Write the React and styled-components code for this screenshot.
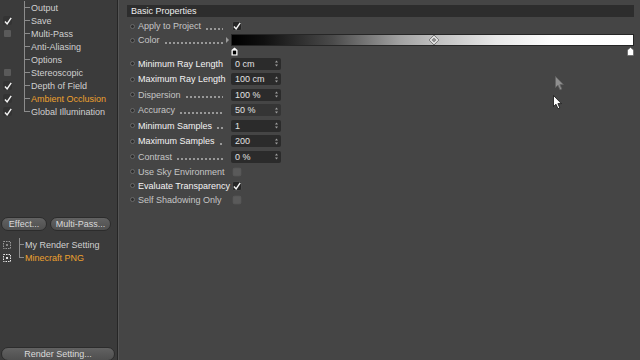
import React from "react";
import styled, { createGlobalStyle } from "styled-components";

// ==================== GLOBAL ====================
const GlobalStyle = createGlobalStyle`
  html, body {
    margin: 0;
    padding: 0;
    background: #454545;
  }
  body {
    font-family: "Liberation Sans", Arial, sans-serif;
    font-size: 9px;
    color: #cfcfcf;
    overflow: hidden;
  }
`;

const Screen = styled.div`
  position: relative;
  display: flex;
  width: 640px;
  height: 360px;
  overflow: hidden;
  background: #454545;
`;

// ==================== SIDEBAR ====================
const Sidebar = styled.div`
  width: 117px;
  flex-shrink: 0;
  display: flex;
  flex-direction: column;
  background: #3b3b3b;
  border-right: 1px solid #262626;
`;

const Tree = styled.div`
  height: 215px;
  flex-shrink: 0;
  padding-top: 1px;
  box-sizing: border-box;
`;

const TreeRow = styled.div`
  display: flex;
  align-items: center;
  height: 13px;
  white-space: nowrap;
`;

const CheckCell = styled.div`
  width: 19px;
  height: 13px;
  flex-shrink: 0;
  display: flex;
  align-items: center;
  padding-left: 3px;
  box-sizing: border-box;
`;

const SideTick = styled.span`
  display: flex;
  align-items: center;
  justify-content: center;
  width: 9px;
  height: 9px;
  border-radius: 2px;
  background: #333333;
`;

const EmptyBox = styled.span`
  display: block;
  width: 7px;
  height: 7px;
  margin-left: 1px;
  border-radius: 1px;
  background: #5a5a5a;
`;

const Branch = styled.span`
  position: relative;
  display: block;
  width: ${(p) => p.$width}px;
  height: 13px;
  flex-shrink: 0;

  &::before {
    content: "";
    position: absolute;
    left: ${(p) => p.$line}px;
    top: 0;
    width: 1px;
    height: ${(p) => (p.$last ? 7 : 13)}px;
    background: #8c8c8c;
  }
  &::after {
    content: "";
    position: absolute;
    left: ${(p) => p.$line}px;
    top: 6px;
    width: ${(p) => p.$width - p.$line - 1}px;
    height: 1px;
    background: #8c8c8c;
  }
`;

const TreeLabel = styled.span`
  color: ${(p) => (p.$active ? "#eea12e" : "#d0d0d0")};
`;

const ButtonRow = styled.div`
  height: 18px;
  flex-shrink: 0;
  display: flex;
  align-items: center;
  gap: 3px;
  padding-left: 1px;
`;

const PillButton = styled.div`
  width: ${(p) => p.$width}px;
  height: 14px;
  box-sizing: border-box;
  display: flex;
  align-items: center;
  justify-content: center;
  border-radius: 7px;
  border: 1px solid #2c2c2c;
  background: linear-gradient(#626262, #4f4f4f);
  color: #dadada;
  white-space: nowrap;
  flex-shrink: 0;
`;

const List = styled.div`
  flex: 1;
  padding-top: 5px;
  box-sizing: border-box;
`;

const ListIcon = styled.svg`
  display: block;
  width: 8px;
  height: 8px;
`;

const BottomBar = styled.div`
  height: 13px;
  flex-shrink: 0;
  padding-left: 1px;
`;

// ==================== MAIN PANEL ====================
const Main = styled.div`
  flex: 1;
  padding: 5px 6px 0 8px;
  box-sizing: border-box;
  border-left: 1px solid #555;
`;

const Header = styled.div`
  height: 12px;
  margin-bottom: 2px;
  display: flex;
  align-items: center;
  padding-left: 4px;
  background: #2d2d2d;
  color: #eeeeee;
`;

const PropRow = styled.div`
  display: flex;
  align-items: center;
  height: ${(p) => p.$h}px;
`;

const Bullet = styled.span`
  width: 11px;
  flex-shrink: 0;
  display: flex;
  align-items: center;
  padding-left: 3px;
  box-sizing: border-box;

  &::before {
    content: "";
    display: block;
    width: 3px;
    height: 3px;
    border-radius: 50%;
    background: #2e2e2e;
    border: 1px solid #6a6a6a;
  }
`;

const LabelCell = styled.div`
  width: 85px;
  height: 11px;
  flex-shrink: 0;
  display: flex;
  align-items: center;
  margin-right: 8px;
  white-space: nowrap;
  position: relative;
`;

const Label = styled.span`
  flex-shrink: 0;
  color: ${(p) => (p.$strong ? "#f4f4f4" : "#c6c6c6")};
`;

const Leader = styled.span`
  flex: 1;
  min-width: 0;
  align-self: flex-end;
  height: 2px;
  margin: 0 0 2px 4px;
  background-image: radial-gradient(circle, #9a9a9a 0.7px, transparent 1px);
  background-size: 4px 2px;
  background-repeat: repeat-x;
`;

const Arrow = styled.span`
  position: absolute;
  right: -6px;
  top: 50%;
  margin-top: -3px;
  width: 0;
  height: 0;
  border-top: 3px solid transparent;
  border-bottom: 3px solid transparent;
  border-left: 3px solid #9a9a9a;
`;

const CheckBox = styled.span`
  width: 10px;
  height: 10px;
  margin-left: 1px;
  border-radius: 2px;
  box-sizing: border-box;
  border: 1px solid ${(p) => (p.$checked ? "#4a4a4a" : "#5a5a5a")};
  background: ${(p) => (p.$checked ? "#262626" : "#5a5a5a")};
  transform: scale(${(p) => (p.$checked ? 1 : 0.85)});
  display: flex;
  align-items: center;
  justify-content: center;
`;

const NumberField = styled.div`
  width: 50px;
  height: 12px;
  box-sizing: border-box;
  display: flex;
  align-items: center;
  justify-content: space-between;
  padding: 0 3px 0 4px;
  border-radius: 2px;
  background: ${(p) => (p.$hover ? "#353535" : "#2b2b2b")};
  color: #e2e2e2;
`;

const Spinner = styled.svg`
  display: block;
  width: 3px;
  height: 7px;
`;

const GradientBar = styled.div`
  position: relative;
  flex: 1;
  height: 12px;
  box-sizing: border-box;
  border: 1px solid #262626;
  background: linear-gradient(
    90deg,
    #000 0%,
    #101010 8%,
    #4a4a4a 25%,
    #a2a2a2 42%,
    #bdbdbd 50%,
    #e8e8e8 66%,
    #fdfdfd 80%,
    #ffffff 100%
  );
`;

const Knot = styled.span`
  position: absolute;
  left: 199px;
  top: 2px;
  width: 4px;
  height: 4px;
  transform: rotate(45deg);
  border: 1px solid #ffffff;
  background: #8e8e8e;
  box-shadow: 0 0 0 0.5px #333;
`;

const StopTrack = styled.div`
  position: relative;
  height: 9px;
  margin-left: 104px;
`;

const Stop = styled.svg`
  position: absolute;
  top: 0;
  width: 7px;
  height: 9px;
  left: ${(p) => p.$left}px;
`;

const Cursor = styled.svg`
  position: absolute;
  left: ${(p) => p.$x}px;
  top: ${(p) => p.$y}px;
  width: 10px;
  height: 15px;
  pointer-events: none;
`;

// ==================== DATA ====================
const passes = [
  { label: "Output", state: "none" },
  { label: "Save", state: "on" },
  { label: "Multi-Pass", state: "off" },
  { label: "Anti-Aliasing", state: "none" },
  { label: "Options", state: "none" },
  { label: "Stereoscopic", state: "off" },
  { label: "Depth of Field", state: "on" },
  { label: "Ambient Occlusion", state: "on", active: true },
  { label: "Global Illumination", state: "on" },
];

const settings = [
  { label: "My Render Setting" },
  { label: "Minecraft PNG", active: true },
];

const fields = [
  { label: "Minimum Ray Length", value: "0 cm", strong: true },
  { label: "Maximum Ray Length", value: "100 cm", strong: true },
  { label: "Dispersion", value: "100 %" },
  { label: "Accuracy", value: "50 %", hover: true },
  { label: "Minimum Samples", value: "1", strong: true },
  { label: "Maximum Samples", value: "200", strong: true },
  { label: "Contrast", value: "0 %" },
];

const toggles = [
  { label: "Use Sky Environment", checked: false },
  { label: "Evaluate Transparency", checked: true, strong: true },
  { label: "Self Shadowing Only", checked: false },
];

// ==================== SMALL PIECES ====================
const Tick = ({ size = 8 }) => (
  <svg width={size} height={size} viewBox="0 0 10 10">
    <path d="M1.2 5.6 L3.9 8.6 L9 1.2" fill="none" stroke="#f4f4f4" strokeWidth="1.8" />
  </svg>
);

const RenderIcon = ({ bright }) => (
  <ListIcon viewBox="0 0 8 8">
    <rect
      x="0.5"
      y="0.5"
      width="7"
      height="7"
      fill="none"
      stroke={bright ? "#e6e6e6" : "#9a9a9a"}
      strokeDasharray="1.5 1"
    />
    <rect x="3" y="3" width="2" height="2" fill={bright ? "#e6e6e6" : "#8a8a8a"} />
  </ListIcon>
);

const SpinArrows = () => (
  <Spinner viewBox="0 0 3 7">
    <path d="M0 2.5 L1.5 0.5 L3 2.5 Z M0 4.5 L1.5 6.5 L3 4.5 Z" fill="#a0a0a0" />
  </Spinner>
);

const ArrowCursor = ({ x, y, fill, stroke, opacity }) => (
  <Cursor $x={x} $y={y} viewBox="0 0 10 15" style={{ opacity }}>
    <path
      d="M0.5 0.5 L0.5 11.5 L3 9.2 L5 13.8 L6.8 13 L4.9 8.6 L8.4 8.6 Z"
      fill={fill}
      stroke={stroke}
      strokeWidth="0.8"
    />
  </Cursor>
);

const PropLabel = ({ label, strong, arrow }) => (
  <LabelCell>
    <Label $strong={strong}>{label}</Label>
    <Leader />
    {arrow && <Arrow />}
  </LabelCell>
);

// ==================== APP ====================
export default function App() {
  return (
    <>
      <GlobalStyle />
      <Screen>
        <Sidebar>
          <Tree>
            {passes.map((p, i) => (
              <TreeRow key={p.label}>
                <CheckCell>
                  {p.state === "on" && (
                    <SideTick>
                      <Tick />
                    </SideTick>
                  )}
                  {p.state === "off" && <EmptyBox />}
                </CheckCell>
                <Branch $width={12} $line={5} $last={i === passes.length - 1} />
                <TreeLabel $active={p.active}>{p.label}</TreeLabel>
              </TreeRow>
            ))}
          </Tree>

          <ButtonRow>
            <PillButton $width={46}>Effect...</PillButton>
            <PillButton $width={61}>Multi-Pass...</PillButton>
          </ButtonRow>

          <List>
            {settings.map((s, i) => (
              <TreeRow key={s.label}>
                <CheckCell>
                  <RenderIcon bright={s.active} />
                </CheckCell>
                <Branch $width={6} $line={0} $last={i === settings.length - 1} />
                <TreeLabel $active={s.active}>{s.label}</TreeLabel>
              </TreeRow>
            ))}
          </List>

          <BottomBar>
            <PillButton $width={114}>Render Setting...</PillButton>
          </BottomBar>
        </Sidebar>

        <Main>
          <Header>Basic Properties</Header>

          <PropRow $h={14}>
            <Bullet />
            <PropLabel label="Apply to Project" />
            <CheckBox $checked>
              <Tick />
            </CheckBox>
          </PropRow>

          <PropRow $h={14}>
            <Bullet />
            <PropLabel label="Color" arrow />
            <GradientBar>
              <Knot />
            </GradientBar>
          </PropRow>

          <StopTrack>
            <Stop $left={0} viewBox="0 0 7 9">
              <path d="M0.5 3 L3.5 0.5 L6.5 3 L6.5 8.5 L0.5 8.5 Z" fill="#fff" />
              <rect x="1.8" y="3.6" width="3.4" height="3.8" fill="#000" />
            </Stop>
            <Stop $left={396} viewBox="0 0 7 9">
              <path d="M0.5 3 L3.5 0.5 L6.5 3 L6.5 8.5 L0.5 8.5 Z" fill="#fff" stroke="#555" strokeWidth="0.6" />
            </Stop>
          </StopTrack>

          {fields.map((f) => (
            <PropRow key={f.label} $h={15.5}>
              <Bullet />
              <PropLabel label={f.label} strong={f.strong} />
              <NumberField $hover={f.hover}>
                <span>{f.value}</span>
                <SpinArrows />
              </NumberField>
            </PropRow>
          ))}

          {toggles.map((t) => (
            <PropRow key={t.label} $h={14}>
              <Bullet />
              <PropLabel label={t.label} strong={t.strong} />
              <CheckBox $checked={t.checked}>{t.checked && <Tick />}</CheckBox>
            </PropRow>
          ))}
        </Main>

        <ArrowCursor x={555} y={76} fill="#9c9c9c" stroke="#6a6a6a" opacity={0.85} />
        <ArrowCursor x={553} y={95} fill="#ffffff" stroke="#111111" opacity={1} />
      </Screen>
    </>
  );
}
